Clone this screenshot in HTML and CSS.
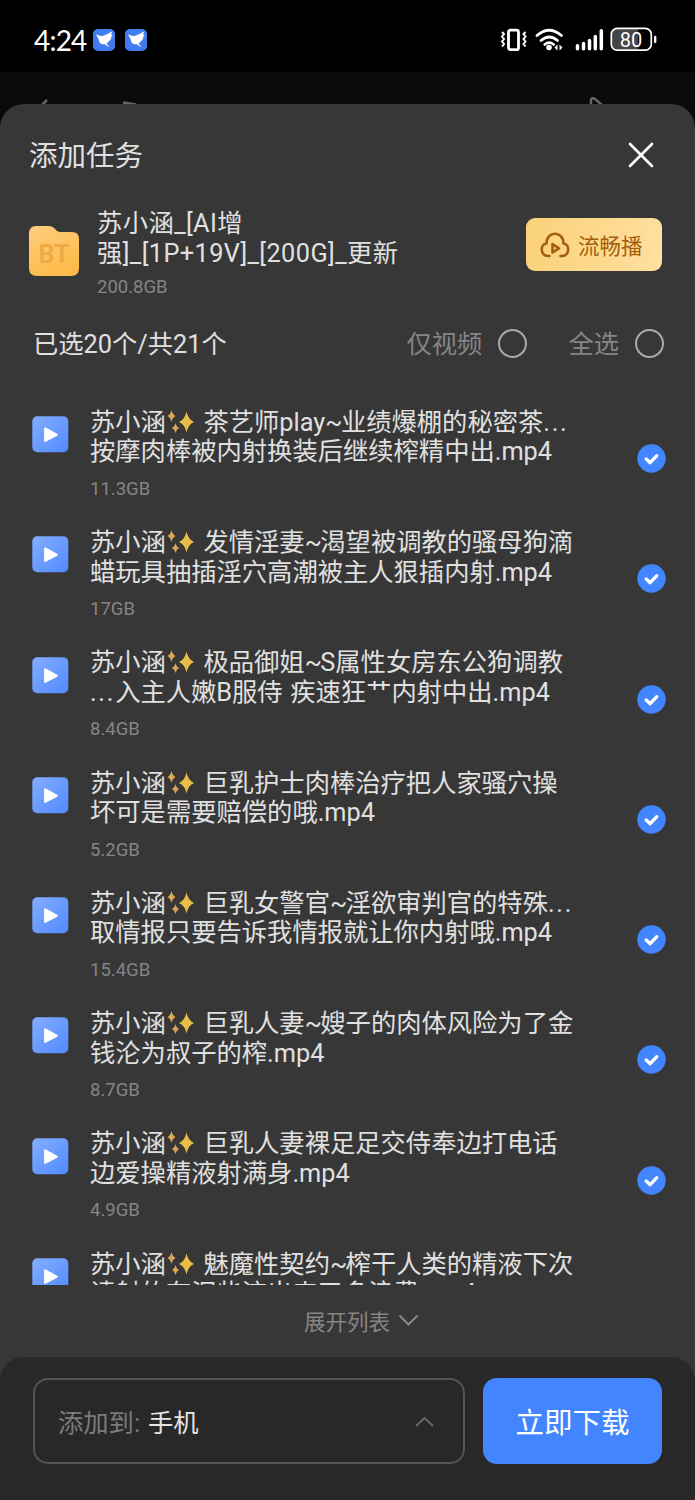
FILE: index.html
```html
<!DOCTYPE html>
<html lang="zh-CN">
<head>
<meta charset="utf-8">
<title>添加任务</title>
<link rel="stylesheet" href="styles.css">
</head>
<body>
<svg class="defs" width="0" height="0">
  <defs>
    <linearGradient id="blue" x1="0" y1="0" x2="1" y2="1"><stop offset="0" stop-color="#83adff"/><stop offset="1" stop-color="#518bff"/></linearGradient>
    <linearGradient id="folder" x1="0" y1="0" x2=".4" y2="1"><stop offset="0" stop-color="#ffcd7c"/><stop offset="1" stop-color="#fdbb4c"/></linearGradient>
    <symbol id="video" viewBox="0 0 37 37"><rect x=".3" y=".3" width="36" height="36" rx="5" fill="url(#blue)"/><path d="M13.200 12.500v12.400l11.400-6.200z" fill="#fff" stroke="#fff" stroke-width="2.200" stroke-linejoin="round"/></symbol>
    <symbol id="check" viewBox="0 0 29 29"><circle cx="14.500" cy="14.500" r="14.200" fill="#4285ff"/><path d="M9.200 15l4 3.700 6.600-7" fill="none" stroke="#fff" stroke-width="3.300" stroke-linecap="round" stroke-linejoin="round"/></symbol>
    <symbol id="spark" viewBox="0 0 30 24"><path d="M20.500 1.500q1.800 8.200 7.500 10.500-5.700 2.300-7.500 10.500-1.800-8.200-7.500-10.500 5.700-2.300 7.500-10.500z" fill="#e9bd45"/><path d="M5.500 0q1 4.600 4 6-3 1.400-4 6-1-4.600-4-6 3-1.400 4-6zM9.500 13q1 4 3.600 5-2.600 1.200-3.600 5-1-3.800-3.600-5 2.600-1 3.600-5z" fill="#dda657"/></symbol>
    <symbol id="bird" viewBox="0 0 22 22"><rect width="22" height="22" rx="5" fill="#427df0"/><path d="M3 5.500 9 7.200Q14 5.500 19 2.500L18.200 6h1.300l-1.800 3 .9.200-3 3.600-2 1.200 2.600 4.500-4.200-3.300C8 16 5.800 14 5.600 10z" fill="#fff"/></symbol>
  </defs>
</svg>
<div class="screen">
  <header class="status">
    <div class="status-left"><span class="clock">4:24</span><svg class="app"><use href="#bird"/></svg><svg class="app"><use href="#bird"/></svg></div>
    <svg class="status-icons" width="160" height="28" viewBox="0 0 160 28" fill="none" stroke="#fff">
      <rect x="8.500" y="4.200" width="10" height="19.500" rx="2" stroke-width="2.800"/>
      <path d="M2 6l2 2-2 2.500L4 13l-2 2.500L4 18l-2 2.500M25.500 6l-2 2 2 2.500-2 2.500 2 2.500-2 2.500 2 2.500" stroke-width="2"/>
      <path d="M37 9.500q12-10.500 24.500 0M41 14.500q8.300-7 16.500 0M44.800 18.500q4.500-3.600 8.800 0" stroke-width="2.700" stroke-linecap="round"/>
      <circle cx="49" cy="21.500" r="2.800" fill="#fff" stroke="none"/>
      <path d="M54.500 21.500l3-3v6zM62.500 21.500l-3-3v6z" fill="#fff" stroke="none"/>
      <path d="M77.500 19.700v3M83.500 17.500v5.200M89.500 14.500v8.200M95.300 10.500v12.200M101.300 4.700v18" stroke-width="3.500" stroke-linecap="round"/>
      <path d="M117 3h21v20h-21q-5-1-5-5V8q0-4 5-5z" fill="#454545" stroke="none"/>
      <rect x="111.300" y="2.400" width="40" height="21.800" rx="6" stroke-width="1.700"/>
      <path d="M155.200 11v5" stroke-width="2.300" stroke-linecap="round"/>
      <text class="battery" x="131" y="20.500" text-anchor="middle">80</text>
    </svg>
  </header>
  <div class="backdrop">
    <svg width="695" height="32" viewBox="0 0 695 32" fill="none" stroke="#666" stroke-width="2.500"><path d="M47 28L42 33M123 30.500l13 2M591 33v-5q1-3 4-1l7 6"/></svg>
  </div>
  <main class="sheet">
    <div class="heading"><h1>添加任务</h1><svg class="close" viewBox="0 0 28 28"><path d="M3 3l22 22M25 3L3 25" stroke="#fff" stroke-width="2.600" stroke-linecap="round"/></svg></div>
    <section class="task">
      <svg class="folder" viewBox="0 0 50 50"><path d="M7 0h13q3 0 5 2l3 3q1.500 1 4 1h11q7 0 7 7v29q0 8-8 8H8q-8 0-8-8V8q0-8 7-8z" fill="url(#folder)"/><text class="bt" x="25" y="37" text-anchor="middle">BT</text></svg>
      <div class="task-info"><h2>苏小涵_[AI增<br>强]_[1P+19V]_[200G]_更新</h2><p>200.8GB</p></div>
      <button class="smooth"><svg width="30" height="26" viewBox="0 0 30 26" fill="none" stroke="#a45e0b" stroke-width="2.600" stroke-linecap="round" stroke-linejoin="round"><path d="M9.500 24H8C0 24 0 12 6.500 11.500 6.500-1.500 23.500-1.500 23.500 11.500 30 12 30 24 22 24h-1.500"/><path d="M12.500 12v8.500l6.500-4.200z"/></svg><span>流畅播</span></button>
    </section>
    <section class="filters"><strong>已选20个/共21个</strong><span>仅视频</span><i></i><span class="all">全选</span><i></i></section>
    <ul class="files">
      <li><svg class="video"><use href="#video"/></svg><div><h3>苏小涵<svg class="spark"><use href="#spark"/></svg> 茶艺师play<span class="tilde">~</span>业绩爆棚的秘密茶<span class="dots">...</span><br>按摩肉棒被内射换装后继续榨精中出.mp4</h3><p>11.3GB</p></div><svg class="check"><use href="#check"/></svg></li>
      <li><svg class="video"><use href="#video"/></svg><div><h3>苏小涵<svg class="spark"><use href="#spark"/></svg> 发情淫妻<span class="tilde">~</span>渴望被调教的骚母狗滴<br>蜡玩具抽插淫穴高潮被主人狠插内射.mp4</h3><p>17GB</p></div><svg class="check"><use href="#check"/></svg></li>
      <li><svg class="video"><use href="#video"/></svg><div><h3>苏小涵<svg class="spark"><use href="#spark"/></svg> 极品御姐<span class="tilde">~</span>S属性女房东公狗调教<br><span class="dots">...</span>入主人嫩B服侍 疾速狂艹内射中出.mp4</h3><p>8.4GB</p></div><svg class="check"><use href="#check"/></svg></li>
      <li><svg class="video"><use href="#video"/></svg><div><h3>苏小涵<svg class="spark"><use href="#spark"/></svg> 巨乳护士肉棒治疗把人家骚穴操<br>坏可是需要赔偿的哦.mp4</h3><p>5.2GB</p></div><svg class="check"><use href="#check"/></svg></li>
      <li><svg class="video"><use href="#video"/></svg><div><h3>苏小涵<svg class="spark"><use href="#spark"/></svg> 巨乳女警官<span class="tilde">~</span>淫欲审判官的特殊<span class="dots">...</span><br>取情报只要告诉我情报就让你内射哦.mp4</h3><p>15.4GB</p></div><svg class="check"><use href="#check"/></svg></li>
      <li><svg class="video"><use href="#video"/></svg><div><h3>苏小涵<svg class="spark"><use href="#spark"/></svg> 巨乳人妻<span class="tilde">~</span>嫂子的肉体风险为了金<br>钱沦为叔子的榨.mp4</h3><p>8.7GB</p></div><svg class="check"><use href="#check"/></svg></li>
      <li><svg class="video"><use href="#video"/></svg><div><h3>苏小涵<svg class="spark"><use href="#spark"/></svg> 巨乳人妻裸足足交侍奉边打电话<br>边爱操精液射满身.mp4</h3><p>4.9GB</p></div><svg class="check"><use href="#check"/></svg></li>
      <li><svg class="video"><use href="#video"/></svg><div><h3>苏小涵<svg class="spark"><use href="#spark"/></svg> 魅魔性契约<span class="tilde">~</span>榨干人类的精液下次<br>请射的有泥些流出来了多浪费.mp4</h3></div></li>
    </ul>
    <div class="expand">展开列表<svg width="21" height="13" viewBox="0 0 21 13"><path d="M1.500 1.500l9 9 9-9" fill="none" stroke="#888" stroke-width="2"/></svg></div>
    <footer class="actions">
      <div class="target"><span>添加到:</span><b>手机</b><svg width="19" height="11" viewBox="0 0 19 11"><path d="M1 10l8.500-8 8.500 8" fill="none" stroke="#686868" stroke-width="2"/></svg></div>
      <button class="download"><span>立即下载</span></button>
    </footer>
  </main>
</div>
</body>
</html>
```

FILE: styles.css
```css
* { box-sizing: border-box; }
body, h1, h2, h3, p, ul { margin: 0; padding: 0; font-weight: 400; }
body { background: #000; color: #e0e0e0; font-family: Roboto, "Noto Sans CJK SC", sans-serif; }
button { border: 0; padding: 0; font-family: inherit; }
svg { display: block; flex: none; }
.defs { position: absolute; }
.screen { width: 695px; height: 1500px; overflow: hidden; display: flex; flex-direction: column; background: #0a0a0a; }
.status { height: 72px; flex: none; display: flex; justify-content: space-between; padding: 26px 35px 0 34px; background: #000; }
.status-left { display: flex; height: 28px; align-items: center; gap: 10px; }
.clock { color: #fff; font: 28px/28px Lato, sans-serif; letter-spacing: -.8px; width: 49px; white-space: nowrap; }
.app { width: 22px; height: 22px; }
.battery { font: 400 20px Roboto, sans-serif; fill: #fff; stroke: none; }
.backdrop { height: 32px; flex: none; }
.sheet { flex: 1; display: flex; flex-direction: column; border-radius: 24px 24px 0 0; background: #373737; }
.heading { height: 100px; flex: none; display: flex; align-items: center; justify-content: space-between; padding: 1px 40px 0 29px; }
h1 { font-size: 28.500px; line-height: 40px; padding-top: 4px; }
.close { width: 28px; height: 28px; }
.task { height: 100px; flex: none; display: flex; align-items: flex-start; padding: 4px 33px 0 29px; }
.folder { width: 50px; height: 50px; margin-top: 18px; }
.bt { font: 700 25px Roboto, sans-serif; fill: #eeaa45; }
.task-info { margin: 1px 0 0 18px; flex: 1; }
h2, h3 { font-size: 25.300px; line-height: 30px; white-space: nowrap; }
h2 { letter-spacing: .42px; }
h3 { line-height: 29.500px; word-spacing: 1.300px; }
.tilde { letter-spacing: -1.600px; }
.dots { letter-spacing: 1.700px; }
.task p, .files p { font-size: 18.500px; line-height: 22px; color: #858585; }
.task-info p { margin-top: 7px; }
.smooth { display: flex; align-items: center; gap: 8px; width: 136px; height: 53px; margin-top: 10px; padding-left: 14px; border-radius: 9px; background: linear-gradient(100deg, #fbd17a, #ffe0a0); font-size: 21.500px; color: #a45e0b; }
.smooth span { padding-bottom: 1px; }
.filters { height: 80px; flex: none; display: flex; align-items: center; padding: 0 31px 0 33px; font-size: 25.300px; line-height: 32px; color: #858585; }
.filters strong, .filters span { padding-top: 2px; }
.filters strong { flex: 1; font-weight: 400; color: #e0e0e0; }
.filters i { width: 29px; height: 29px; margin: 0 0 1px 16px; border: 2px solid #ababab; border-radius: 50%; }
.filters .all { margin-left: 41px; }
.files { height: 901px; flex: none; overflow: hidden; padding: 23px 29px 0 32px; list-style: none; }
.files li { height: 120.250px; display: flex; align-items: flex-start; }
.files li > div { flex: 1; margin: .8px 0 0 21px; }
.video { width: 37px; height: 37px; margin-top: 9px; }
.spark { display: inline-block; width: 30px; height: 24px; vertical-align: -3px; }
.files p { margin-top: 11px; }
.check { width: 29px; height: 29px; margin-top: 37px; }
.expand { height: 72px; flex: none; display: flex; align-items: center; justify-content: center; gap: 8px; padding: 0 0 1px 28px; font-size: 21.500px; color: #858585; }
.actions { flex: 1; display: flex; align-items: flex-start; gap: 18px; padding: 21px 33px 0; border-radius: 24px 24px 0 0; background: #282828; }
.target { height: 86px; flex: 1; display: flex; align-items: center; padding: 0 29px 0 23px; border: 2px solid #555; border-radius: 15px; font-size: 25.300px; color: #7c7c7c; }
.target span, .target b { padding-bottom: 1px; }
.target b { flex: 1; margin-left: 8px; color: #e5e5e5; font-weight: 400; }
.download { width: 179px; height: 86px; border-radius: 14px; background: #4285ff; color: #fff; font-size: 28.500px; }
.download span { display: block; padding-bottom: 2px; }
```
